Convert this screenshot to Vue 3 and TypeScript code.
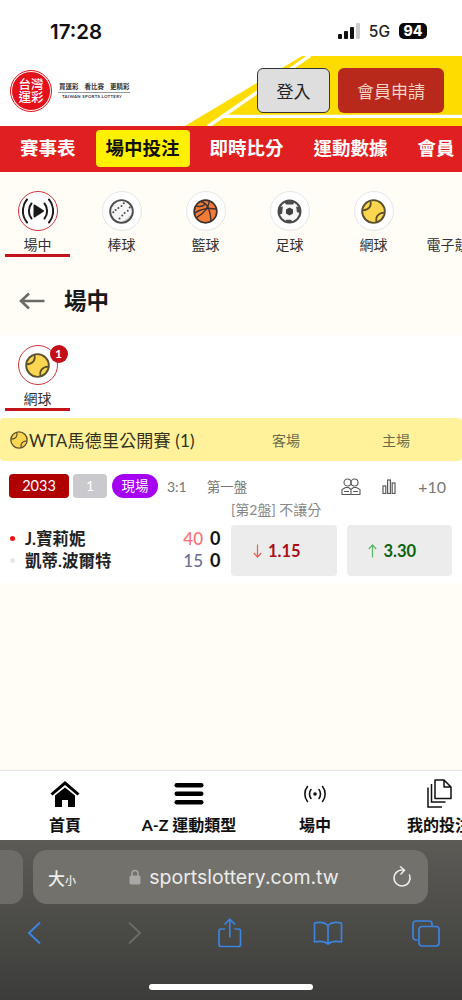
<script setup lang="ts">
const navItems = ['賽事表', '場中投注', '即時比分', '運動數據', '會員']

const sports = [
  { label: '場中', icon: 'live', active: true },
  { label: '棒球', icon: 'baseball', active: false },
  { label: '籃球', icon: 'basketball', active: false },
  { label: '足球', icon: 'soccer', active: false },
  { label: '網球', icon: 'tennis', active: false },
  { label: '電子競技', icon: '', active: false },
]

const players = [
  { name: 'J.寶莉妮', dot: '#f01010', point: 40, pointColor: '#ff6f6f', sets: 0 },
  { name: '凱蒂.波爾特', dot: '#e6e6ee', point: 15, pointColor: '#6c6c98', sets: 0 },
]
</script>

<template>
  <div class="page">
    <svg class="sprite" aria-hidden="true">
      <symbol id="tennis" viewBox="0 0 32 32">
        <circle cx="16" cy="16" r="14.5" fill="#fdd64f" stroke="#5b5130" stroke-width="2.4" />
        <path d="M12 2.5C14 9 10 14 2.5 14.5M29.5 17.5C22 18 18 23 20 29.5" fill="none" stroke="#5b5130" stroke-width="2.2" />
      </symbol>
      <symbol id="baseball" viewBox="0 0 32 32">
        <circle cx="16" cy="16" r="14.5" fill="#f6f6f6" />
        <path d="M27 23a14 14 0 0 1-13 7l-1-1c7 0 12-5 15-10z" fill="#cfcfcf" />
        <circle cx="16" cy="16" r="14.5" fill="none" stroke="#4c4c4c" stroke-width="2.4" />
        <g fill="#4c4c4c">
          <circle cx="19" cy="5.500" r="1.300" /><circle cx="16" cy="9" r="1.300" />
          <circle cx="12" cy="11.500" r="1.300" /><circle cx="8.500" cy="14" r="1.300" />
          <circle cx="5.500" cy="17" r="1.300" /><circle cx="26.500" cy="11" r="1.300" />
          <circle cx="24" cy="15" r="1.300" /><circle cx="20" cy="18" r="1.300" />
          <circle cx="17" cy="21" r="1.300" /><circle cx="13.500" cy="25" r="1.300" />
        </g>
      </symbol>
      <symbol id="basketball" viewBox="0 0 32 32">
        <circle cx="16" cy="16" r="14.500" fill="#f47b36" stroke="#3a3130" stroke-width="2.200" />
        <path d="M2 18C10 13 20 11 30 13M10 3.500c7 1 12 8 13 25M21 2.500c-1 8-7 16-16 21M4 9c4 1 8 1 11-2" fill="none" stroke="#3a3130" stroke-width="1.700" />
      </symbol>
      <symbol id="soccer" viewBox="0 0 32 32">
        <circle cx="16" cy="16" r="15" fill="#f7f7f7" />
        <path d="M24 28l5-9-1 6-3 3.500z" fill="#cfcfcf" />
        <circle cx="16" cy="16" r="14" fill="none" stroke="#4a4a4a" stroke-width="2.600" />
        <polygon points="9,3 23,3 20.500,7 11.500,7" fill="#4a4a4a" />
        <polygon points="2,11 7.500,9.500 6.500,19 2,20" fill="#4a4a4a" />
        <polygon points="30,11 24.500,9.500 25.500,17 30,18" fill="#4a4a4a" />
        <polygon points="10,29.500 20,29.500 18,26.500 12,26.500" fill="#4a4a4a" />
        <polygon points="16,11 20.500,13.500 20.500,18.500 16,21 11.500,18.500 11.500,13.500" fill="#3f3f3f" />
      </symbol>
    </svg>

    <div class="status-bar">
      <span class="clock">17:28</span>
      <div class="status-right">
        <svg width="22" height="16" viewBox="0 0 22 16">
          <rect x="0" y="11" width="4" height="5" rx="1" fill="#111" />
          <rect x="6" y="8" width="4" height="8" rx="1" fill="#111" />
          <rect x="12" y="4" width="4" height="12" rx="1" fill="#111" />
          <rect x="18" y="0" width="4" height="16" rx="1" fill="#ccc" />
        </svg>
        <span class="network">5G</span>
        <span class="battery">94</span>
      </div>
    </div>

    <header class="header">
      <svg class="header-deco" width="462" height="71" viewBox="0 0 462 71" aria-hidden="true">
        <polygon points="185,71 302,1 462,1 462,71" fill="#ffdc00" />
        <path d="M208 71.500L310 0.500" stroke="#fff" stroke-width="3.400" fill="none" />
        <path d="M222 61.300H462" stroke="#fff" stroke-width="3.300" fill="none" />
      </svg>
      <div class="logo">
        <div class="logo-mark">
          <span>台灣</span>
          <span>運彩</span>
        </div>
        <div class="logo-text">
          <div class="logo-slogan">
            <span>買運彩</span><span>看比賽</span><span>更精彩</span>
          </div>
          <div class="logo-en">TAIWAN SPORTS LOTTERY</div>
        </div>
      </div>
      <div class="auth">
        <button class="login">登入</button>
        <button class="join">會員申請</button>
      </div>
    </header>

    <nav class="main-nav">
      <a v-for="(item, i) in navItems" :key="item" class="nav-item" :class="{ current: i === 1 }">{{ item }}</a>
    </nav>

    <section class="top-area">
      <div class="sport-strip">
        <div v-for="s in sports" :key="s.label" class="sport" :class="{ active: s.active }">
          <div v-if="s.icon" class="sport-circle">
            <svg v-if="s.icon === 'live'" width="32" height="32" viewBox="0 0 32 32" fill="none" stroke="#1a1a1a" stroke-width="2" stroke-linecap="round">
              <path d="M5 4.500C-0.500 11 -0.500 21 5 27.500M27 4.500C32.500 11 32.500 21 27 27.500" />
              <path d="M9.500 8.500C6 12.500 6 19.500 9.500 23.500M22.500 8.500C26 12.500 26 19.500 22.500 23.500" />
              <polygon points="12.500,10.500 21,16 12.500,21.500" fill="#1a1a1a" stroke-linejoin="round" />
            </svg>
            <svg v-else width="25" height="25"><use :href="'#' + s.icon" /></svg>
          </div>
          <div v-else class="sport-circle blank"></div>
          <span class="sport-label">{{ s.label }}</span>
        </div>
      </div>
      <div class="page-title">
        <svg width="26" height="18" viewBox="0 0 26 18" fill="none" stroke="#6b6b66" stroke-width="2.600">
          <path d="M25.500 9H2M10 1.500L2 9l8 7.500" />
        </svg>
        <h1>場中</h1>
      </div>
    </section>

    <section class="live-area">
      <div class="sub-strip">
        <div class="sport active">
          <div class="sport-circle">
            <svg width="25" height="25"><use href="#tennis" /></svg>
            <span class="badge">1</span>
          </div>
          <span class="sport-label">網球</span>
        </div>
      </div>

      <div class="league-bar">
        <div class="league-name">
          <svg width="18" height="18"><use href="#tennis" /></svg>
          <span>WTA馬德里公開賽 (1)</span>
        </div>
        <span class="side away">客場</span>
        <span class="side home">主場</span>
      </div>

      <div class="match">
        <div class="match-meta">
          <span class="tag code">2033</span>
          <span class="tag count">1</span>
          <span class="tag live">現場</span>
          <span class="set-score">3:1</span>
          <span class="set-name">第一盤</span>
          <div class="meta-tools">
            <svg width="20" height="17" viewBox="0 0 20 17" fill="none" stroke="#5a5a5a" stroke-width="1.100">
              <circle cx="6.500" cy="4.500" r="3.500" />
              <circle cx="13.500" cy="4.500" r="3.500" />
              <path d="M1 16.500v-5l3.500-2h3l2.500 2 2.500-2h3l3.500 2v5zM3 13.500h5M12 13.500h5M10 11.500v5" />
            </svg>
            <svg width="14" height="15" viewBox="0 0 14 15" fill="none" stroke="#5a5a5a" stroke-width="1.200">
              <rect x="1" y="7" width="2.800" height="7.500" />
              <rect x="5.600" y="1" width="2.800" height="13.500" />
              <rect x="10.200" y="4" width="2.800" height="10.500" />
            </svg>
            <span class="more">+10</span>
          </div>
        </div>
        <div class="match-body">
          <div class="teams">
            <div v-for="p in players" :key="p.name" class="team">
              <span class="dot" :style="{ background: p.dot }"></span>
              <span class="team-name">{{ p.name }}</span>
              <span class="point" :style="{ color: p.pointColor }">{{ p.point }}</span>
              <span class="sets">{{ p.sets }}</span>
            </div>
          </div>
          <div class="market">
            <div class="market-title">[第2盤] 不讓分</div>
            <div class="odds">
              <button class="odd down">
                <svg width="9" height="14" viewBox="0 0 9 14" fill="none" stroke="#ef5a5a" stroke-width="1.200">
                  <path d="M4.500 0.500V13M0.800 9l3.700 4 3.700-4" />
                </svg>
                <span>1.15</span>
              </button>
              <button class="odd up">
                <svg width="9" height="14" viewBox="0 0 9 14" fill="none" stroke="#5cb566" stroke-width="1.200">
                  <path d="M4.500 13.500V1M0.800 5l3.700-4 3.700 4" />
                </svg>
                <span>3.30</span>
              </button>
            </div>
          </div>
        </div>
      </div>
    </section>

    <div class="spacer"></div>

    <nav class="tabbar">
      <div class="tab tab-home">
        <svg width="30" height="28" viewBox="0 0 30 28">
          <path d="M15 1L0.500 13.500 2.500 15.500 15 5l12.500 10.500 2-2z" fill="#000" />
          <path d="M5 15.500L15 7.500l10 8V27h-7v-7h-6v7H5z" fill="#000" />
        </svg>
        <span>首頁</span>
      </div>
      <div class="tab tab-az">
        <svg width="30" height="22" viewBox="0 0 30 22" fill="#000">
          <rect x="0.500" y="0" width="29" height="4.500" rx="2.200" />
          <rect x="0.500" y="8.500" width="29" height="4.500" rx="2.200" />
          <rect x="0.500" y="17" width="29" height="4.500" rx="2.200" />
        </svg>
        <span>A-Z 運動類型</span>
      </div>
      <div class="tab tab-live">
        <svg width="24" height="18" viewBox="0 0 24 18" fill="none" stroke="#111" stroke-width="1.600" stroke-linecap="round">
          <path d="M4.500 1.500C1 5.500 1 12.500 4.500 16.500M19.500 1.500C23 5.500 23 12.500 19.500 16.500M8 4.500C6 7 6 11 8 13.500M16 4.500C18 7 18 11 16 13.500" />
          <circle cx="12" cy="9" r="1.800" fill="#111" stroke="none" />
        </svg>
        <span>場中</span>
      </div>
      <div class="tab tab-bets">
        <svg width="26" height="29" viewBox="0 0 26 29" fill="none" stroke="#111" stroke-width="1.500">
          <path d="M9 1h9l7 7v11.500H9zM18 1v7h7" stroke-linejoin="round" />
          <path d="M5.500 5v18h14M2 8.500V28h14" />
        </svg>
        <span>我的投注</span>
      </div>
    </nav>

    <footer class="safari">
      <div class="url-row">
        <div class="url-prev"></div>
        <div class="url-pill">
          <span class="text-size">大<small>小</small></span>
          <span class="address">
            <svg width="12" height="16" viewBox="0 0 12 16">
              <path d="M3 7V4.500a3 3 0 0 1 6 0V7" fill="none" stroke="#a9a8a6" stroke-width="1.500" />
              <rect x="0.500" y="6.500" width="11" height="9" rx="1.800" fill="#a9a8a6" />
            </svg>
            <span>sportslottery.com.tw</span>
          </span>
          <svg width="20" height="22" viewBox="0 0 20 22" fill="none" stroke="#eee" stroke-width="1.500">
            <path d="M12 4.200A8 8 0 1 0 17.500 9" stroke-linecap="round" />
            <path d="M8.500 0.800L12.500 4.200 9 8" stroke-linecap="round" stroke-linejoin="round" />
          </svg>
        </div>
      </div>
      <div class="toolbar">
        <svg width="14" height="24" viewBox="0 0 14 24" fill="none" stroke="#3d84e0" stroke-width="2">
          <path d="M13 1.500L2 12l11 10.500" />
        </svg>
        <svg class="forward" width="14" height="24" viewBox="0 0 14 24" fill="none" stroke="#6a6a68" stroke-width="2">
          <path d="M1 1.500L12 12 1 22.500" />
        </svg>
        <svg width="24" height="30" viewBox="0 0 24 30" fill="none" stroke="#3d84e0" stroke-width="1.700">
          <path d="M7 11H3a2 2 0 0 0-2 2v13.500a2 2 0 0 0 2 2h17.500a2 2 0 0 0 2-2V13a2 2 0 0 0-2-2h-4" />
          <path d="M11.800 19.500V1.500M6.500 6.500L11.800 1.200 17 6.500" />
        </svg>
        <svg width="30" height="24" viewBox="0 0 30 24" fill="none" stroke="#3d84e0" stroke-width="1.700">
          <path d="M15 4.500C12 1.500 6 1 1.500 2v19c4.500-1 10.500-.5 13.500 2 3-2.500 9-3 13.500-2V2C24 1 18 1.500 15 4.500zM15 4.500V23" stroke-linejoin="round" />
        </svg>
        <svg width="28" height="27" viewBox="0 0 28 27" fill="none" stroke="#3d84e0" stroke-width="1.700">
          <path d="M5.500 20H4a3 3 0 0 1-3-3V4a3 3 0 0 1 3-3h13a3 3 0 0 1 3 3v2" />
          <rect x="7" y="6.500" width="20" height="19.500" rx="3" />
        </svg>
      </div>
      <div class="home-indicator"></div>
    </footer>
  </div>
</template>

<style scoped>
.page {
  width: 462px;
  height: 1000px;
  display: flex;
  flex-direction: column;
  overflow: hidden;
  background: #fffdf6;
  font-family: Lato, "Noto Sans CJK TC", sans-serif;
  color: #222;
}
.sprite {
  position: absolute;
  width: 0;
  height: 0;
}
.status-bar {
  height: 55px;
  flex: none;
  background: #fff;
  display: flex;
  justify-content: space-between;
  align-items: center;
  padding: 7px 35px 0 50px;
  box-sizing: border-box;
}
.clock {
  font: 600 20.5px Inter, sans-serif;
  color: #111;
}
.status-right {
  display: flex;
  align-items: center;
  gap: 9px;
}
.network {
  font: 500 15.5px Inter, sans-serif;
  color: #222;
}
.battery {
  width: 28px;
  height: 16px;
  border-radius: 5px;
  background: #0a0a0a;
  color: #fff;
  font: 800 14px/16px Inter, sans-serif;
  text-align: center;
}
.header {
  position: relative;
  height: 71px;
  flex: none;
  background: #fff;
  display: flex;
  justify-content: space-between;
  align-items: center;
  padding: 0 18px 0 9px;
}
.header-deco {
  position: absolute;
  left: 0;
  top: 0;
}
.logo {
  position: relative;
  display: flex;
  align-items: center;
  gap: 5px;
}
.logo-mark {
  width: 38px;
  height: 38px;
  border-radius: 50%;
  background: #e4111b;
  border: 1px solid #fff;
  outline: 1.500px solid #e4111b;
  margin: 2px;
  display: flex;
  flex-direction: column;
  align-items: center;
  justify-content: center;
  color: #fff;
  font-size: 12.500px;
  font-weight: 500;
  line-height: 13px;
}
.logo-slogan {
  display: flex;
  gap: 6px;
  font-size: 6.500px;
  font-weight: 700;
  line-height: 9px;
  padding: 0 0 1px 1px;
  color: #333;
  border-bottom: 1px solid #999;
  width: 71px;
}
.logo-en {
  font-size: 4.300px;
  font-weight: 700;
  margin-top: 1px;
  padding-left: 4px;
  letter-spacing: 0.300px;
  color: #333;
  white-space: nowrap;
}
.auth {
  position: relative;
  display: flex;
  gap: 8px;
}
.auth button {
  height: 45px;
  border-radius: 6px;
  font-family: inherit;
  font-size: 17px;
  padding: 0;
}
.login {
  width: 73px;
  background: #dedede;
  border: 1.500px solid #333;
  color: #222;
}
.join {
  width: 106px;
  background: #b8281b;
  border: 0;
  color: #f4d5c7;
}
.main-nav {
  height: 46px;
  flex: none;
  background: #e01f20;
  display: flex;
  align-items: center;
  gap: 10px;
  padding-left: 10px;
  white-space: nowrap;
  box-sizing: border-box;
}
.nav-item {
  padding: 0 10px;
  height: 37px;
  line-height: 36px;
  margin-top: -1px;
  font-size: 18.500px;
  font-weight: 700;
  color: #fff;
  border-radius: 4px;
  flex: none;
}
.nav-item.current {
  background: #fff000;
  color: #111;
}
.top-area {
  height: 163px;
  flex: none;
  box-sizing: border-box;
  padding: 19px 0 0 5px;
}
.sport-strip {
  display: flex;
  gap: 19px;
  white-space: nowrap;
}
.sport {
  width: 65px;
  flex: none;
  display: flex;
  flex-direction: column;
  align-items: center;
  height: 66px;
  box-sizing: border-box;
}
.sport:last-child:not(:first-child) {
  margin-left: -3px;
}
.sport.active {
  border-bottom: 3px solid #c4131b;
}
.sport-circle {
  position: relative;
  width: 40px;
  height: 40px;
  box-sizing: border-box;
  border-radius: 50%;
  background: #fff;
  border: 1px solid #e6e6ea;
  display: flex;
  align-items: center;
  justify-content: center;
  flex: none;
}
.sport-circle.blank {
  visibility: hidden;
}
.sport.active .sport-circle {
  border: 1.500px solid #d0333a;
}
.sport-label {
  font-size: 14px;
  line-height: 20px;
  margin-top: 4px;
  color: #333;
}
.page-title {
  display: flex;
  align-items: center;
  gap: 19px;
  margin: 27px 0 0 14px;
}
.page-title h1 {
  margin: 0;
  font-size: 22.500px;
  line-height: 34px;
  font-weight: 700;
  color: #1a1a1a;
}
.live-area {
  flex: none;
  height: 248px;
  background: #fff;
}
.sub-strip {
  padding: 10px 0 0 5px;
  height: 83px;
  box-sizing: border-box;
}
.badge {
  position: absolute;
  top: -1px;
  right: -11px;
  width: 18px;
  height: 18px;
  border-radius: 50%;
  background: #c30d17;
  color: #fff;
  font-size: 12px;
  font-weight: 700;
  line-height: 18px;
  text-align: center;
}
.league-bar {
  height: 43px;
  background: #fff29a;
  border-radius: 4px;
  display: flex;
  align-items: center;
  padding-left: 10px;
  position: relative;
}
.league-name {
  display: flex;
  align-items: center;
  gap: 1px;
  font-size: 17px;
  letter-spacing: 0.200px;
  color: #33301c;
  width: 262px;
  flex: none;
}
.side {
  font-size: 14px;
  color: #6d6a48;
  width: 28px;
}
.side.home {
  margin-left: 82px;
}
.match {
  padding: 12px 10px 0 9px;
}
.match-meta {
  display: flex;
  align-items: center;
  height: 26px;
}
.tag {
  height: 24px;
  line-height: 24px;
  text-align: center;
  color: #fff;
  font-size: 14px;
  box-sizing: border-box;
  border-radius: 4px;
}
.tag.code {
  width: 60px;
  background: #b10000;
  font-size: 14.500px;
}
.tag.count {
  width: 34px;
  margin-left: 4px;
  background: #c9c9ce;
}
.tag.live {
  width: 46px;
  margin-left: 5px;
  background: #a400f3;
  border-radius: 12px;
  font-size: 13.500px;
}
.set-score {
  margin-left: 9px;
  font-size: 14px;
  color: #777;
}
.set-name {
  margin-left: 20px;
  font-size: 13.500px;
  color: #777;
}
.meta-tools {
  margin-left: auto;
  display: flex;
  align-items: center;
  gap: 21px;
  padding-right: 6px;
}
.more {
  font-size: 16px;
  color: #777;
  margin-left: 1px;
}
.match-body {
  display: flex;
  justify-content: space-between;
}
.teams {
  width: 212px;
  padding-top: 28px;
}
.team {
  display: flex;
  align-items: center;
  height: 22px;
}
.dot {
  width: 5px;
  height: 5px;
  border-radius: 50%;
  margin-left: 1px;
}
.team-name {
  margin-left: 10px;
  font-size: 16.500px;
  font-weight: 700;
  color: #222;
  flex: 1;
}
.point {
  font-size: 17px;
  font-weight: 500;
}
.sets {
  margin-left: 7px;
  width: 11px;
  font-size: 18px;
  font-weight: 700;
  color: #111;
}
.market {
  width: 221px;
}
.market-title {
  font-size: 14px;
  color: #888;
  line-height: 20px;
  margin-top: 1px;
}
.odds {
  display: flex;
  gap: 10px;
  margin-top: 5px;
}
.odd {
  flex: 1;
  height: 51px;
  border: 0;
  border-radius: 4px;
  background: #ececec;
  font-family: inherit;
  font-size: 16.500px;
  font-weight: 700;
  padding: 0 14px 0 0;
  display: flex;
  align-items: center;
  justify-content: center;
  gap: 6px;
}
.odd.down {
  color: #ad0c14;
}
.odd.up {
  color: #0b630f;
}
.spacer {
  flex: 1;
}
.tabbar {
  height: 70px;
  flex: none;
  background: #fff;
  border-top: 1px solid #e6e6e6;
  box-sizing: border-box;
  display: flex;
  white-space: nowrap;
}
.tab {
  display: flex;
  flex-direction: column;
  align-items: center;
  justify-content: flex-end;
  height: 65px;
  font-size: 16px;
  font-weight: 700;
  color: #111;
  flex: none;
}
.tab svg {
  margin-bottom: 4px;
}
.tab-home {
  width: 130px;
}
.tab-az {
  width: 118px;
}
.tab-live {
  width: 134px;
}
.tab-bets {
  width: 64px;
  margin-left: 25px;
}
.tab-az svg {
  margin-bottom: 7px;
}
.tab-live svg {
  margin-bottom: 9px;
}
.safari {
  height: 160px;
  flex: none;
  background: linear-gradient(#5c5b56, #3c3c3a);
  position: relative;
  overflow: hidden;
}
.url-row {
  display: flex;
  gap: 10px;
  margin: 10px 0 0 -60px;
}
.url-prev {
  width: 83px;
  height: 54px;
  flex: none;
  border-radius: 12px;
  background: #6d6c68;
}
.url-pill {
  width: 395px;
  height: 54px;
  flex: none;
  box-sizing: border-box;
  border-radius: 14px;
  background: #72716c;
  display: flex;
  align-items: center;
  padding: 0 16px 0 15px;
  color: #eeeeea;
}
.text-size {
  font-size: 17px;
  font-weight: 500;
  width: 30px;
}
.text-size small {
  font-size: 11px;
}
.address {
  flex: 1;
  display: flex;
  justify-content: center;
  align-items: center;
  gap: 8px;
  font: 400 19.500px Inter, sans-serif;
  color: #ececea;
  padding-right: 2px;
}
.toolbar {
  display: grid;
  grid-template-columns: repeat(5, 98px);
  justify-items: center;
  align-items: center;
  margin: 14px 0 0 -15px;
  height: 30px;
}
.forward {
  margin-left: 6px;
}
.home-indicator {
  position: absolute;
  left: 149px;
  bottom: 10px;
  width: 164px;
  height: 6px;
  border-radius: 3px;
  background: #fff;
}
</style>
